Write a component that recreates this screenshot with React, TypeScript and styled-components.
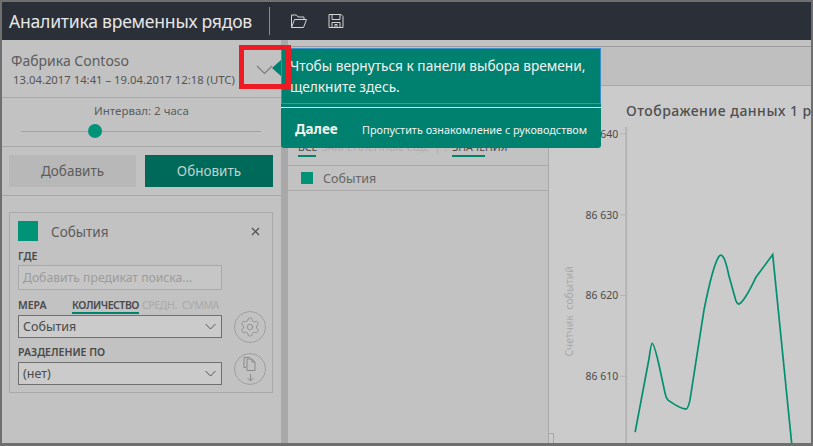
import React from 'react';
import styled, { createGlobalStyle } from 'styled-components';
import { Settings } from 'lucide-react';

const Global = createGlobalStyle`
  html, body { margin: 0; padding: 0; height: 100%; overflow: hidden; }
  #root { height: 100%; }
  * { box-sizing: border-box; }
`;
const Frame = styled.div`
  position: relative; width: 813px; height: 446px; overflow: hidden;
  border: 2px solid #6f6f6f; border-bottom-width: 3px;
  display: flex; flex-direction: column;
  font-family: "Noto Sans", "Open Sans", sans-serif; color: #555; background: #c2c2c2;
`;
const TopBar = styled.header`
  flex: 0 0 38px; background: #2b2f37; display: flex; align-items: center; padding-left: 7px;
`;
const AppTitle = styled.h1`
  margin: 0; font-size: 17.6px; letter-spacing: -0.25px; font-weight: 400; color: #e6e6e6; white-space: nowrap; width: 260px;
`;
const BarDivider = styled.div`width: 1px; height: 28px; background: #8c8c8c; margin-right: 20px;`;
const BarIcon = styled.svg`width: 18px; height: 18px; margin-right: 19px; fill: none; stroke: #d4d4d4; stroke-width: 1;`;
const Body = styled.div`flex: 1; display: flex; min-height: 0;`;
const LeftPanel = styled.aside`
  flex: 0 0 279px; background: #c2c2c2; display: flex; flex-direction: column;
`;
const Splitter = styled.div`flex: 0 0 7px; background: #a9a9a9;`;
const Range = styled.section`
  height: 58px; border-bottom: 1px solid #a8a8a8; padding: 11px 0 0 9px; position: relative;
`;
const Source = styled.div`font-size: 14px; line-height: 20px; color: #5c5c5c;`;
const Dates = styled.div`font-size: 11.3px; line-height: 18px; color: #555; margin-left: 2px; white-space: nowrap;`;
const Chevron = styled.svg`
  position: absolute; left: 254px; top: 25px; width: 17px; height: 10px; fill: none; stroke: #7c7c7c; stroke-width: 1.2;
`;
const IntervalBox = styled.section`
  height: 49px; border-bottom: 1px solid #a8a8a8; padding-top: 5px; display: flex; flex-direction: column; align-items: center;
`;
const IntervalLabel = styled.div`font-size: 11.5px; line-height: 16px; color: #5c5c5c;`;
const Track = styled.div`
  position: relative; width: 240px; height: 1px; background: #a3a3a3; margin: 12px 1px 0 0;
`;
const Thumb = styled.div`
  position: absolute; left: 67px; top: -7px; width: 14px; height: 14px; border-radius: 50%; background: #009377;
`;
const Buttons = styled.section`
  height: 49px; border-bottom: 1px solid #a8a8a8; padding: 8px 0 0 7px; display: flex; gap: 9px;
`;
const Btn = styled.button<{ $primary?: boolean }>`
  width: ${p => (p.$primary ? 128 : 127)}px; height: 32px; border: 0; padding: 0; font: inherit; font-size: 13.5px;
  background: ${p => (p.$primary ? '#006a5a' : '#b8b8b8')};
  color: ${p => (p.$primary ? '#bdd3ce' : '#5c5c5c')};
`;
const Card = styled.section`
  margin: 16px 0 0 7px; width: 264px; height: 181px; border: 1px solid #a9a9a9; padding: 8px 0 0 8px;
  display: flex; flex-direction: column;
`;
const CardHead = styled.div`display: flex; align-items: center; height: 20px;`;
const Swatch = styled.div<{ $size: number }>`
  flex: 0 0 auto; width: ${p => p.$size}px; height: ${p => p.$size}px; background: #009377;
`;
const CardTitle = styled.div`font-size: 13.5px; line-height: 22px; color: #5c5c5c; margin-left: 13px; flex: 1; padding-top: 1px;`;
const Close = styled.svg`width: 9px; height: 9px; margin-right: 12px; stroke: #4c4c4c; stroke-width: 1.2;`;
const FieldLabel = styled.div<{ $top: number; $bottom?: number }>`
  font-size: 10.5px; font-weight: 600; line-height: 14px; color: #4a4a4a; white-space: nowrap;
  margin-top: ${p => p.$top}px; margin-bottom: ${p => p.$bottom ?? 0}px;
`;
const SearchInput = styled.div`
  width: 204px; height: 25px; margin-top: 2px; border: 1px solid #a9a9a9; background: #c6c6c6;
  font-size: 12.2px; line-height: 23px; padding-left: 4px; color: #9c9c9c; white-space: nowrap;
`;
const MeasureRow = styled.div`display: flex; align-items: flex-end; margin: 8px 0 1px; height: 16px;`;
const MeasureLabel = styled.div`font-size: 10.5px; font-weight: 600; line-height: 14px; color: #4a4a4a; width: 54px; align-self: flex-start;`;
const MeasureTab = styled.div<{ $active?: boolean }>`
  font-size: 10.5px; font-weight: ${p => (p.$active ? 600 : 500)}; line-height: 14px; letter-spacing: -0.45px; height: 16px;
  color: ${p => (p.$active ? '#4a4a4a' : '#adadad')};
  border-bottom: 2px solid ${p => (p.$active ? '#00856c' : 'transparent')};
  margin-right: ${p => (p.$active ? 3 : 5)}px; white-space: nowrap;
`;
const SelectRow = styled.div`display: flex; align-items: flex-start; width: 248px; height: 23px; justify-content: space-between;`;
const SelectBox = styled.div`
  width: 204px; height: 23px; border: 1px solid #6f6f6f; background: #cbcbcb; display: flex; align-items: center;
  justify-content: space-between; padding: 0 5px 0 4px; font-size: 12.5px; color: #4a4a4a;
`;
const SelectChevron = styled.svg`width: 11px; height: 7px; fill: none; stroke: #555; stroke-width: 1;`;
const RoundBtn = styled.div<{ $lift: number }>`
  flex: 0 0 32px; height: 32px; margin-top: ${p => -p.$lift}px; border-radius: 50%; border: 1px solid #a0a0a0;
  display: flex; align-items: center; justify-content: center; color: #8a8a8a;
`;
const CopyIcon = styled.svg`width: 16px; height: 26px; fill: none; stroke: #8a8a8a; stroke-width: 1;`;
const RightPanel = styled.main`flex: 1; display: flex; flex-direction: column; min-width: 0; background: #cbcbcb;`;
const Strip = styled.div`flex: 0 0 46px; background: #bfbfbf; border-bottom: 1px solid #a8a8a8;`;
const StripLine = styled.div`height: 7px; background: #c2c2c2; border-bottom: 1px solid #9b9b9b;`;
const Split = styled.div`flex: 1; display: flex; min-height: 0;`;
const ListCol = styled.div`flex: 0 0 261px; background: #c2c2c2; border-right: 1px solid #a8a8a8; display: flex; flex-direction: column;`;
const Filters = styled.div`
  height: 80px; border-bottom: 1px solid #a8a8a8; padding: 54px 0 0 10px; display: flex; font-size: 10.5px; line-height: 14px; white-space: nowrap;
`;
const FilterTab = styled.div<{ $active?: boolean; $w?: number; $line?: number }>`
  color: ${p => (p.$active ? '#4a4a4a' : '#adadad')}; height: 17px; margin-right: 4px;
  width: ${p => (p.$w ? p.$w + 'px' : 'auto')}; overflow: hidden;
  background: ${p => (p.$line ? `linear-gradient(#00856c, #00856c) left bottom / ${p.$line}px 2px no-repeat` : 'none')};
`;
const ListRow = styled.div`
  height: 25px; border-bottom: 1px solid #a8a8a8; display: flex; align-items: center; padding-left: 13px; gap: 10px; font-size: 12.5px; color: #666;
`;
const ChartCol = styled.div`flex: 1; min-width: 0; display: flex; flex-direction: column; position: relative; overflow: hidden;`;
const ChartTitle = styled.div`
  flex: 0 0 41px; padding: 15px 0 0 77px; font-size: 14px; letter-spacing: 0.5px; line-height: 20px; font-weight: 500; color: #4f4f4f; white-space: nowrap;
`;
const ChartSvg = styled.svg`display: block; width: 261px; height: 317px; font-family: "Noto Sans", sans-serif;`;
const Corner = styled.div`position: absolute; left: 0; bottom: 0; width: 5px; height: 10px; border: 1px solid #a8a8a8; border-left: 0; border-bottom: 0;`;
const Tip = styled.div`
  position: absolute; left: 279px; top: 46px; width: 320px; height: 100px; z-index: 5; background: #00806f;
  border-radius: 0 0 3px 3px; display: flex; flex-direction: column; color: #f2f2f2;
  &::before { content: ''; position: absolute; left: -9px; top: 12px; border: 8px solid transparent; border-left-width: 0; border-right: 9px solid #00806f; }
`;
const TipBody = styled.div`
  height: 56px; border: 1px solid #3b8fc4; padding: 6px 0 0 8px; font-size: 13.7px; line-height: 21px; white-space: nowrap;
`;
const TipRule = styled.div`height: 1px; background: #e8f2f0; margin-top: 3px;`;
const TipActions = styled.div`flex: 1; display: flex; align-items: center; padding: 2px 0 0 14px; white-space: nowrap;`;
const TipNext = styled.div`font-size: 13.5px; font-weight: 700; width: 67px;`;
const TipSkip = styled.div`font-size: 10.85px;`;
const Highlight = styled.div`
  position: absolute; left: 237px; top: 43px; width: 52px; height: 44px; border: 5px solid #ed1c24; z-index: 6;
`;

const ticks: [string, number][] = [['86 640', 133], ['86 630', 214], ['86 620', 295], ['86 610', 376]];
const ox = 550, oy = 126;
const AXIS_X = 77;

export default function App() {
  return (
    <>
      <Global />
      <Frame>
        <TopBar>
          <AppTitle>Аналитика временных рядов</AppTitle>
          <BarDivider />
          <BarIcon viewBox="0 0 18 18"><path d="M1.5 15.5V3h5l1.5 2h6v2.5M1.5 15.5H13.5L16.5 7.5H4.5Z" /></BarIcon>
          <BarIcon viewBox="0 0 18 18"><path d="M2 2.5H14L16 4.5V15.5H2ZM5 2.5V7.5H13V2.5M5 15.5V10.5H13V15.5M8 12.5V15.5H10V12.5Z" /></BarIcon>
        </TopBar>
        <Body>
          <LeftPanel>
            <Range>
              <Source>Фабрика Contoso</Source>
              <Dates>13.04.2017 14:41 – 19.04.2017 12:18 (UTC)</Dates>
              <Chevron viewBox="0 0 17 10"><path d="M1 1L8.5 8.5L16 1" /></Chevron>
            </Range>
            <IntervalBox>
              <IntervalLabel>Интервал: 2 часа</IntervalLabel>
              <Track><Thumb /></Track>
            </IntervalBox>
            <Buttons>
              <Btn>Добавить</Btn>
              <Btn $primary>Обновить</Btn>
            </Buttons>
            <Card>
              <CardHead>
                <Swatch $size={20} />
                <CardTitle>События</CardTitle>
                <Close viewBox="0 0 9 9"><path d="M1 1L8 8M8 1L1 8" /></Close>
              </CardHead>
              <FieldLabel $top={8}>ГДЕ</FieldLabel>
              <SearchInput>Добавить предикат поиска...</SearchInput>
              <MeasureRow>
                <MeasureLabel>МЕРА</MeasureLabel>
                <MeasureTab $active>КОЛИЧЕСТВО</MeasureTab>
                <MeasureTab>СРЕДН.</MeasureTab>
                <MeasureTab>СУММА</MeasureTab>
              </MeasureRow>
              <SelectRow>
                <SelectBox>События<SelectChevron viewBox="0 0 11 7"><path d="M.5 1L5.5 6L10.5 1" /></SelectChevron></SelectBox>
                <RoundBtn $lift={4}><Settings size={22} strokeWidth={0.9} /></RoundBtn>
              </SelectRow>
              <FieldLabel $top={7} $bottom={3}>РАЗДЕЛЕНИЕ ПО</FieldLabel>
              <SelectRow>
                <SelectBox>(нет)<SelectChevron viewBox="0 0 11 7"><path d="M.5 1L5.5 6L10.5 1" /></SelectChevron></SelectBox>
                <RoundBtn $lift={9}>
                  <CopyIcon viewBox="0 0 16 26"><path d="M4 11.5H2V1.5H7.5L9 3M5 3H10L13 6V14.5H5ZM10 3V6H13M8.5 18V25M5.5 22L8.5 25L11.5 22" /></CopyIcon>
                </RoundBtn>
              </SelectRow>
            </Card>
          </LeftPanel>
          <Splitter />
          <RightPanel>
            <Strip><StripLine /></Strip>
            <Split>
              <ListCol>
                <Filters>
                  <FilterTab $active $line={18}>ВСЕ</FilterTab>
                  <FilterTab $w={109}>ЗАКРЕПЛЕННЫЕ ЕЩЕ</FilterTab>
                  <FilterTab>| ↕</FilterTab>
                  <FilterTab $active $line={33}>ЗНАЧЕНИЯ</FilterTab>
                </Filters>
                <ListRow><Swatch $size={12} />События</ListRow>
              </ListCol>
              <ChartCol>
                <ChartTitle>Отображение данных 1 р</ChartTitle>
                <ChartSvg viewBox="0 0 261 317">
                  <line x1={AXIS_X} y1={0} x2={AXIS_X} y2={317} stroke="#b4b4b4" strokeWidth={2} />
                  {ticks.map(([t, y]) => (
                    <g key={t}>
                      <line x1={71} x2={76} y1={y - oy} y2={y - oy} stroke="#b4b4b4" />
                      <text x={69} y={y - oy + 4} textAnchor="end" fontSize={10.5} fill="#4a4a4a">{t}</text>
                    </g>
                  ))}
                  <text transform="translate(24,185) rotate(-90)" textAnchor="middle" fontSize={10.5} fill="#a8a8a8">{'Счетчик\u00a0 событий'}</text>
                  <path
                    d="M636 432 L650 358 Q652 343 653 343 Q655 343 660 365 L666 393 Q667 398 669 400 Q680 408 687 409 Q689 409 691 400 L705 310 Q714 265 720 256 Q722 253 724 256 Q727 260 730 275 L737 300 Q739 305 741 303 Q746 300 757 277 L774 254 L793 443"
                    transform={`translate(${-ox},${-oy})`}
                    fill="none" stroke="#00906f" strokeWidth={1.7}
                  />
                </ChartSvg>
                <Corner />
              </ChartCol>
            </Split>
          </RightPanel>
        </Body>
        <Tip>
          <TipBody>Чтобы вернуться к панели выбора времени,<br />щелкните здесь.</TipBody>
          <TipRule />
          <TipActions>
            <TipNext>Далее</TipNext>
            <TipSkip>Пропустить ознакомление с руководством</TipSkip>
          </TipActions>
        </Tip>
        <Highlight />
      </Frame>
    </>
  );
}
